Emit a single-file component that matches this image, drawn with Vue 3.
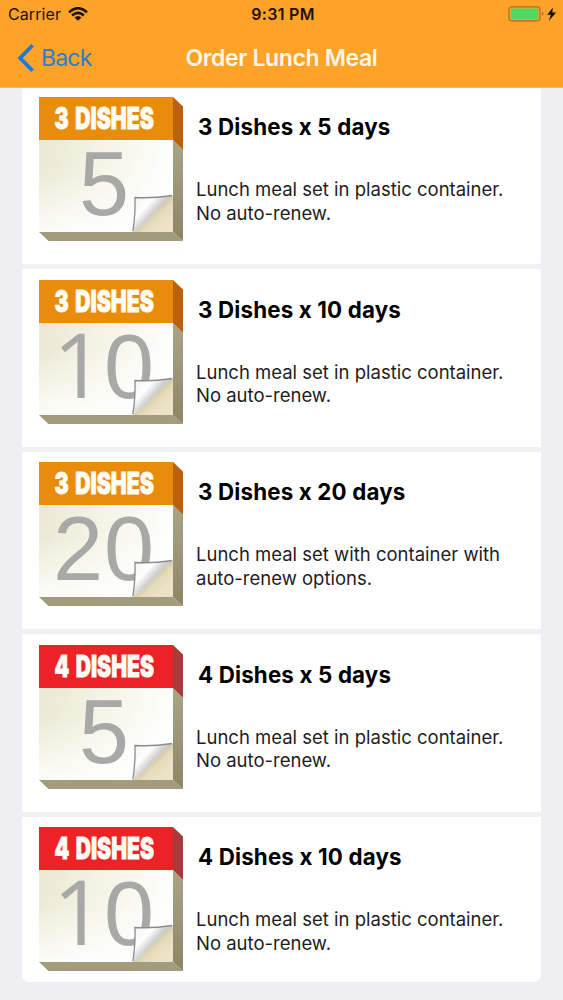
<template>
  <div class="screen">
    <header class="header">
      <div class="status-bar">
        <div class="status-left">
          <span class="carrier">Carrier</span>
          <svg class="wifi" width="20" height="14" viewBox="0 0 20 14">
            <g fill="none" stroke="#1c1204" stroke-width="2.5">
              <path d="M1 5.2 Q10 -2.8 19 5.2" />
              <path d="M4.1 8.5 Q10 3.2 15.9 8.5" />
            </g>
            <path d="M6.5 10.6 Q10 7.5 13.5 10.6 L10 13.8 Z" fill="#1c1204" />
          </svg>
        </div>
        <span class="time">9:31 PM</span>
        <div class="status-right">
          <svg width="50" height="18" viewBox="0 0 50 18">
            <rect x="0.9" y="1.8" width="31" height="14" rx="2.8" fill="none" stroke="#a8701d" stroke-width="1.2" />
            <rect x="2.6" y="3.6" width="27.6" height="10.4" rx="1.3" fill="#4cd964" />
            <path d="M33.8 6.6 Q35.5 7.2 35.5 8.8 Q35.5 10.4 33.8 11 Z" fill="#a8701d" />
            <path d="M44.9 2.4 L39.2 9.8 H42.8 L40.9 15.8 L48.2 7.6 H44.3 Z" fill="#170e02" />
          </svg>
        </div>
      </div>
      <nav class="nav-bar">
        <div class="back">
          <svg width="18" height="30" viewBox="0 0 18 30">
            <path d="M15.6 2.2 L3.2 15 L15.6 27.8" fill="none" stroke="#167be0" stroke-width="3.8" />
          </svg>
          <span class="back-label">Back</span>
        </div>
        <h1 class="nav-title">Order Lunch Meal</h1>
      </nav>
    </header>

    <main class="list">
      <article v-for="meal in meals" :key="meal.id" class="meal">
        <svg class="calendar" width="145" height="145" viewBox="0 0 145 145">
          <defs>
            <linearGradient :id="'page' + meal.id" x1="0" y1="0.2" x2="1" y2="0.45">
              <stop offset="0" stop-color="#ebe9d3" />
              <stop offset="0.5" stop-color="#f6f5e9" />
              <stop offset="1" stop-color="#ffffff" />
            </linearGradient>
            <linearGradient :id="'fade' + meal.id" x1="0" y1="0" x2="0" y2="1">
              <stop offset="0.35" stop-color="#fff" stop-opacity="0" />
              <stop offset="1" stop-color="#fff" stop-opacity="0.8" />
            </linearGradient>
            <linearGradient :id="'side' + meal.id" x1="0" y1="0" x2="0" y2="1">
              <stop offset="0" stop-color="#aaa587" />
              <stop offset="1" stop-color="#8d8466" />
            </linearGradient>
            <linearGradient :id="'curl' + meal.id" gradientUnits="userSpaceOnUse" x1="97" y1="101" x2="116" y2="118">
              <stop offset="0" stop-color="#f4f4f4" />
              <stop offset="0.5" stop-color="#ffffff" />
              <stop offset="1" stop-color="#bdbdbd" />
            </linearGradient>
            <linearGradient :id="'under' + meal.id" gradientUnits="userSpaceOnUse" x1="112" y1="114" x2="124" y2="127">
              <stop offset="0" stop-color="#c9c2a8" />
              <stop offset="0.5" stop-color="#e6dcba" />
              <stop offset="1" stop-color="#ece2c4" />
            </linearGradient>
          </defs>
          <path d="M134 43 L144 53 V144 L134 135 Z" :fill="`url(#side${meal.id})`" />
          <path d="M0 135 H134 L144 144 H9.5 Z" fill="#a29c7d" />
          <rect y="43" width="134" height="92" :fill="`url(#page${meal.id})`" />
          <rect y="43" width="134" height="92" :fill="`url(#fade${meal.id})`" />
          <rect width="134" height="43" :fill="colors[meal.dishes].front" />
          <path d="M134 0 L144 9.5 V53 L134 43 Z" :fill="colors[meal.dishes].side" />
          <text class="cal-label" x="15.5" y="31.5" textLength="99.5" lengthAdjust="spacingAndGlyphs">{{ meal.dishes }} DISHES</text>
          <text class="cal-number" y="118.3">
            <tspan
              v-for="(digit, i) in String(meal.days)"
              :key="i"
              :x="digitX(meal.days, i)"
              :class="{ one: digit === '1' }"
            >{{ digit }}</tspan>
          </text>
          <path d="M133 98.5 Q122 107 115 116 Q106 127 93.5 135 H134 V98.5 Z" :fill="`url(#under${meal.id})`" />
          <path d="M96 100.5 Q114 101.5 133 98.5 Q122 107 115 116 Q106 127 93.5 135 Q96.5 119 96 100.5 Z" :fill="`url(#curl${meal.id})`" />
          <path d="M93.8 134 Q96.5 119 96 100.5 Q114 101.5 133 98.5" fill="none" stroke="#8b8b88" stroke-width="1.3" />
        </svg>
        <div class="info">
          <h2 class="meal-title">{{ meal.dishes }} Dishes x {{ meal.days }} days</h2>
          <p class="meal-text">{{ meal.text[0] }}<br />{{ meal.text[1] }}</p>
        </div>
      </article>
    </main>
  </div>
</template>

<script setup>
const plain = ['Lunch meal set in plastic container.', 'No auto-renew.']

const meals = [
  { id: 1, dishes: 3, days: 5, text: plain },
  { id: 2, dishes: 3, days: 10, text: plain },
  { id: 3, dishes: 3, days: 20, text: ['Lunch meal set with container with', 'auto-renew options.'] },
  { id: 4, dishes: 4, days: 5, text: plain },
  { id: 5, dishes: 4, days: 10, text: plain }
]

// Calendar header colors by number of dishes
const colors = {
  3: { front: '#e98c0c', side: '#b9610f' },
  4: { front: '#ec2227', side: '#a93a3c' }
}

// Left edge of each digit on the calendar page
const digitX = (days, i) => {
  if (days < 10) return 40
  return i === 0 ? 14 : 65
}
</script>

<style>
body {
  margin: 0;
  background: #efeef3;
}
</style>

<style scoped>
.screen {
  height: 1000px;
  overflow: hidden;
  background: #efeef3;
  font-family: Inter, "Liberation Sans", sans-serif;
  color: #000;
}
.header {
  height: 88px;
  background: #ffa228;
  border-bottom: 1px solid #efb461;
  box-sizing: border-box;
}
.status-bar {
  display: grid;
  grid-template-columns: 1fr auto 1fr;
  align-items: center;
  height: 28px;
  padding: 0 5px 0 8px;
  color: #1c1204;
}
.status-left {
  display: flex;
  align-items: center;
  gap: 7px;
}
.carrier {
  font-size: 16px;
  letter-spacing: 0.1px;
}
.time {
  font-size: 16px;
  font-weight: 600;
  letter-spacing: 0.3px;
}
.status-right {
  display: flex;
  justify-content: flex-end;
}
.nav-bar {
  display: grid;
  grid-template-columns: 1fr auto 1fr;
  align-items: center;
  height: 60px;
  padding: 0 17px;
}
.back {
  display: flex;
  align-items: center;
  gap: 6px;
  color: #2a7fce;
}
.back-label {
  font-size: 23px;
  letter-spacing: -0.8px;
}
.nav-title {
  margin: 0;
  font-size: 23px;
  font-weight: 600;
  letter-spacing: -0.37px;
  color: #fff6e6;
}
.list {
  width: 519px;
  height: 894px;
  margin-left: 22px;
  overflow: hidden;
  border-radius: 0 0 7px 7px;
  background: #fff;
}
.meal {
  display: flex;
  box-sizing: border-box;
  height: 182.5px;
  padding: 10.7px 0 0 17px;
  border-bottom: 5px solid #f1f0f3;
}
.meal:first-child {
  height: 181px;
  padding-top: 9px;
}
.calendar {
  flex: none;
  overflow: visible;
}
.cal-label {
  font-family: Inter, "Liberation Sans", sans-serif;
  font-size: 29.5px;
  font-weight: 900;
  word-spacing: 3px;
  fill: #fffdf5;
  stroke: #fffdf5;
  stroke-width: 0.8px;
}
.cal-number {
  font-family: "Liberation Sans", sans-serif;
  font-size: 90px;
  fill: #a8a8a6;
}
.one {
  font-family: "Open Sans", "Noto Sans", sans-serif;
}
.info {
  padding: 16.3px 0 0 12px;
}
.meal-title {
  margin: 0 0 0 2px;
  font-size: 22.3px;
  line-height: 28px;
  font-weight: 700;
  letter-spacing: 0.17px;
}
.meal-text {
  margin: 37px 0 0;
  font-size: 18.5px;
  line-height: 23.4px;
  color: #1d1d1f;
}
</style>
